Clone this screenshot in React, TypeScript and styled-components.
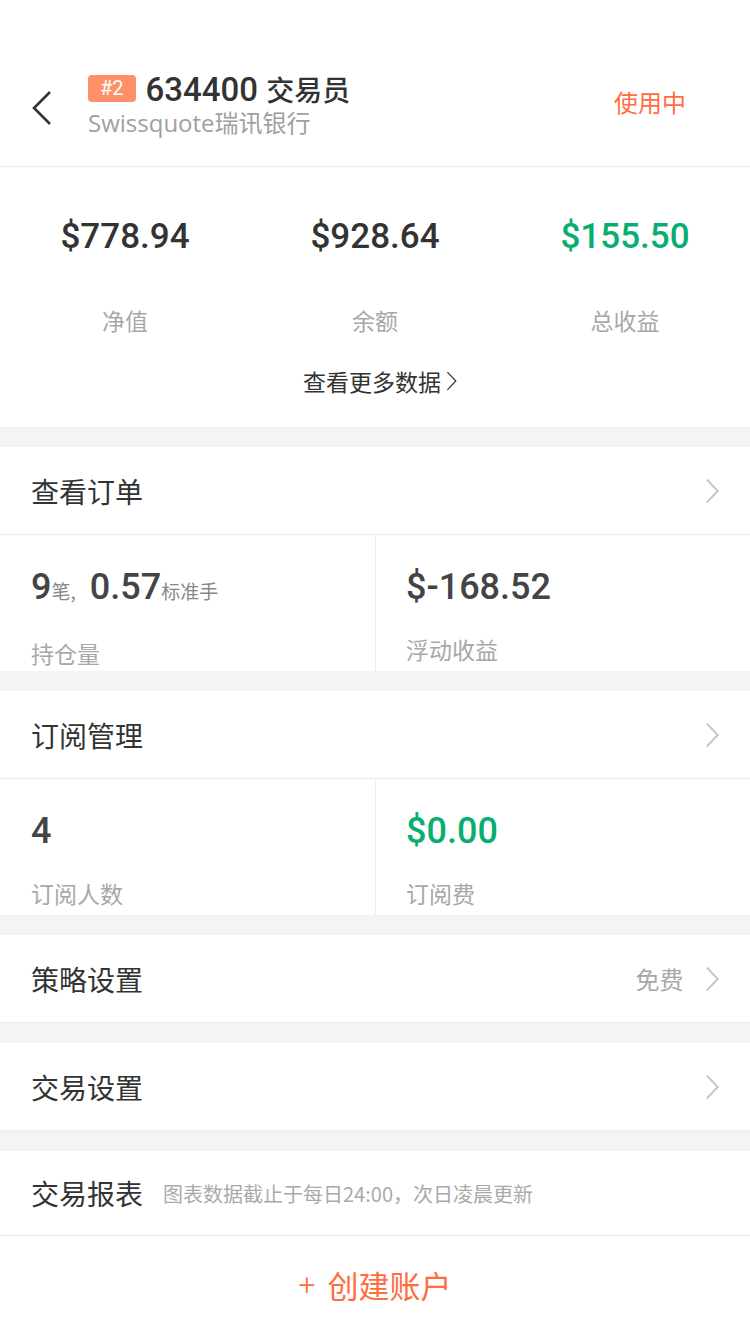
import React from 'react';
import styled, { createGlobalStyle } from 'styled-components';

const GlobalStyle = createGlobalStyle`
  html, body {
    margin: 0;
    padding: 0;
    background: #ffffff;
  }
  body {
    font-family: 'Noto Sans CJK SC', Roboto, sans-serif;
    color: #333333;
    -webkit-font-smoothing: antialiased;
  }
  * {
    box-sizing: border-box;
  }
`;

const ORANGE = '#ff6d3f';
const GREEN = '#07ae70';
const NUM_FONT = `Roboto, 'Noto Sans CJK SC', sans-serif`;

const Page = styled.div`
  width: 750px;
  min-height: 1334px;
  background: #fff;
  display: flex;
  flex-direction: column;
`;

const Header = styled.div`
  height: 167px;
  padding: 42px 64px 0 31px;
  display: flex;
  align-items: center;
  border-bottom: 1px solid #ececec;
`;

const BackButton = styled.div`
  width: 24px;
  height: 40px;
  margin-top: 8px;
  display: flex;
  align-items: center;
  svg {
    display: block;
  }
`;

const HeaderInfo = styled.div`
  flex: 1;
  margin-left: 33px;
  display: flex;
  flex-direction: column;
`;

const TitleRow = styled.div`
  display: flex;
  align-items: center;
  height: 36px;
`;

const Badge = styled.span`
  height: 27px;
  padding: 0 12px;
  border-radius: 4px;
  background: #ff8f68;
  color: #fff;
  font-family: ${NUM_FONT};
  font-size: 20px;
  line-height: 27px;
`;

const Title = styled.span`
  margin-left: 10px;
  font-size: 33px;
  font-weight: 500;
  color: #333;
  font-family: ${NUM_FONT};
  span {
    font-family: 'Noto Sans CJK SC', sans-serif;
    font-weight: 500;
    font-size: 28px;
  }
`;

const Subtitle = styled.div`
  margin-top: 1px;
  font-size: 24px;
  line-height: 30px;
  color: #a0a0a0;
  font-family: 'Open Sans', 'Noto Sans CJK SC', sans-serif;
`;

const Status = styled.div`
  font-size: 24px;
  color: ${ORANGE};
  margin-top: -6px;
`;

const Stats = styled.div`
  height: 260px;
  padding-top: 50px;
  display: flex;
  flex-direction: column;
  align-items: center;
`;

const StatGrid = styled.div`
  width: 100%;
  display: grid;
  grid-template-columns: repeat(3, 1fr);
`;

const StatCol = styled.div`
  display: flex;
  flex-direction: column;
  align-items: center;
`;

const StatValue = styled.div<{ $green?: boolean }>`
  font-family: ${NUM_FONT};
  font-size: 35px;
  font-weight: 500;
  line-height: 40px;
  color: ${(p) => (p.$green ? GREEN : '#333')};
`;

const StatLabel = styled.div`
  margin-top: 48px;
  font-size: 23px;
  line-height: 30px;
  color: #a8a8a8;
`;

const MoreLink = styled.div`
  margin-top: 31px;
  display: flex;
  align-items: center;
  gap: 5px;
  font-size: 23px;
  line-height: 30px;
  color: #333;
  margin-left: 10px;
`;

const Gap = styled.div`
  height: 20px;
  background: #f4f4f4;
`;

const Row = styled.div<{ $h?: number }>`
  height: ${(p) => p.$h ?? 88}px;
  padding: 0 30px 0 31px;
  display: flex;
  align-items: center;
  border-bottom: 1px solid #ececec;
`;

const RowTitle = styled.div`
  font-size: 28px;
  color: #333;
`;

const RowNote = styled.div`
  margin-left: 20px;
  font-size: 20px;
  color: #aaa;
`;

const RowRight = styled.div`
  margin-left: auto;
  display: flex;
  align-items: center;
  gap: 22px;
  font-size: 24px;
  color: #a8a8a8;
`;

const Cells = styled.div`
  display: grid;
  grid-template-columns: 375px 1fr;
  height: 136px;
`;

const Cell = styled.div<{ $divider?: boolean }>`
  padding: 32px 0 0 ${(p) => (p.$divider ? 30 : 31)}px;
  border-left: ${(p) => (p.$divider ? '1px solid #ececec' : 'none')};
  display: flex;
  flex-direction: column;
`;

const CellValue = styled.div<{ $green?: boolean }>`
  font-family: ${NUM_FONT};
  font-size: 36px;
  font-weight: 500;
  line-height: 40px;
  color: ${(p) => (p.$green ? GREEN : '#444')};
  display: flex;
  align-items: baseline;
`;

const Unit = styled.span<{ $gap?: number }>`
  font-family: 'Noto Sans CJK SC', sans-serif;
  font-size: 19px;
  font-weight: 400;
  color: #888;
  margin-right: ${(p) => p.$gap ?? 0}px;
`;

const CellLabel = styled.div`
  margin-top: 27px;
  font-size: 23px;
  line-height: 30px;
  color: #a8a8a8;
`;

const Footer = styled.div`
  flex: 1;
  display: flex;
  align-items: center;
  justify-content: center;
  gap: 12px;
  color: ${ORANGE};
  font-size: 31px;
  padding-bottom: 2px;
`;

const Plus = styled.span`
  font-family: ${NUM_FONT};
  font-size: 30px;
  font-weight: 300;
`;

const Chevron: React.FC<{ size?: number; color?: string; width?: number }> = ({
  size = 26,
  color = '#c8c8c8',
  width = 2,
}) => (
  <svg width={size * 0.56} height={size} viewBox="0 0 14 26" fill="none">
    <path d="M1.5 1.5 L12.5 13 L1.5 24.5" stroke={color} strokeWidth={width} />
  </svg>
);

const NavRow: React.FC<{ title: string; right?: string }> = ({ title, right }) => (
  <Row>
    <RowTitle>{title}</RowTitle>
    <RowRight>
      {right}
      <Chevron />
    </RowRight>
  </Row>
);

export default function App() {
  return (
    <Page>
      <GlobalStyle />
      <Header>
        <BackButton>
          <svg width="22" height="36" viewBox="0 0 22 36" fill="none">
            <path d="M19 2 L3 18 L19 34" stroke="#333" strokeWidth="2.6" />
          </svg>
        </BackButton>
        <HeaderInfo>
          <TitleRow>
            <Badge>#2</Badge>
            <Title>
              634400 <span>交易员</span>
            </Title>
          </TitleRow>
          <Subtitle>Swissquote瑞讯银行</Subtitle>
        </HeaderInfo>
        <Status>使用中</Status>
      </Header>

      <Stats>
        <StatGrid>
          <StatCol>
            <StatValue>$778.94</StatValue>
            <StatLabel>净值</StatLabel>
          </StatCol>
          <StatCol>
            <StatValue>$928.64</StatValue>
            <StatLabel>余额</StatLabel>
          </StatCol>
          <StatCol>
            <StatValue $green>$155.50</StatValue>
            <StatLabel>总收益</StatLabel>
          </StatCol>
        </StatGrid>
        <MoreLink>
          查看更多数据
          <Chevron size={20} color="#333" width={1.6} />
        </MoreLink>
      </Stats>

      <Gap />
      <NavRow title="查看订单" />
      <Cells>
        <Cell>
          <CellValue>
            9<Unit $gap={14}>笔,</Unit>0.57<Unit>标准手</Unit>
          </CellValue>
          <CellLabel>持仓量</CellLabel>
        </Cell>
        <Cell $divider>
          <CellValue>$-168.52</CellValue>
          <CellLabel>浮动收益</CellLabel>
        </Cell>
      </Cells>

      <Gap />
      <NavRow title="订阅管理" />
      <Cells>
        <Cell>
          <CellValue>4</CellValue>
          <CellLabel>订阅人数</CellLabel>
        </Cell>
        <Cell $divider>
          <CellValue $green>$0.00</CellValue>
          <CellLabel>订阅费</CellLabel>
        </Cell>
      </Cells>

      <Gap />
      <NavRow title="策略设置" right="免费" />
      <Gap />
      <NavRow title="交易设置" />
      <Gap />
      <Row $h={85}>
        <RowTitle>交易报表</RowTitle>
        <RowNote>图表数据截止于每日24:00，次日凌晨更新</RowNote>
      </Row>

      <Footer>
        <Plus>+</Plus>
        创建账户
      </Footer>
    </Page>
  );
}
